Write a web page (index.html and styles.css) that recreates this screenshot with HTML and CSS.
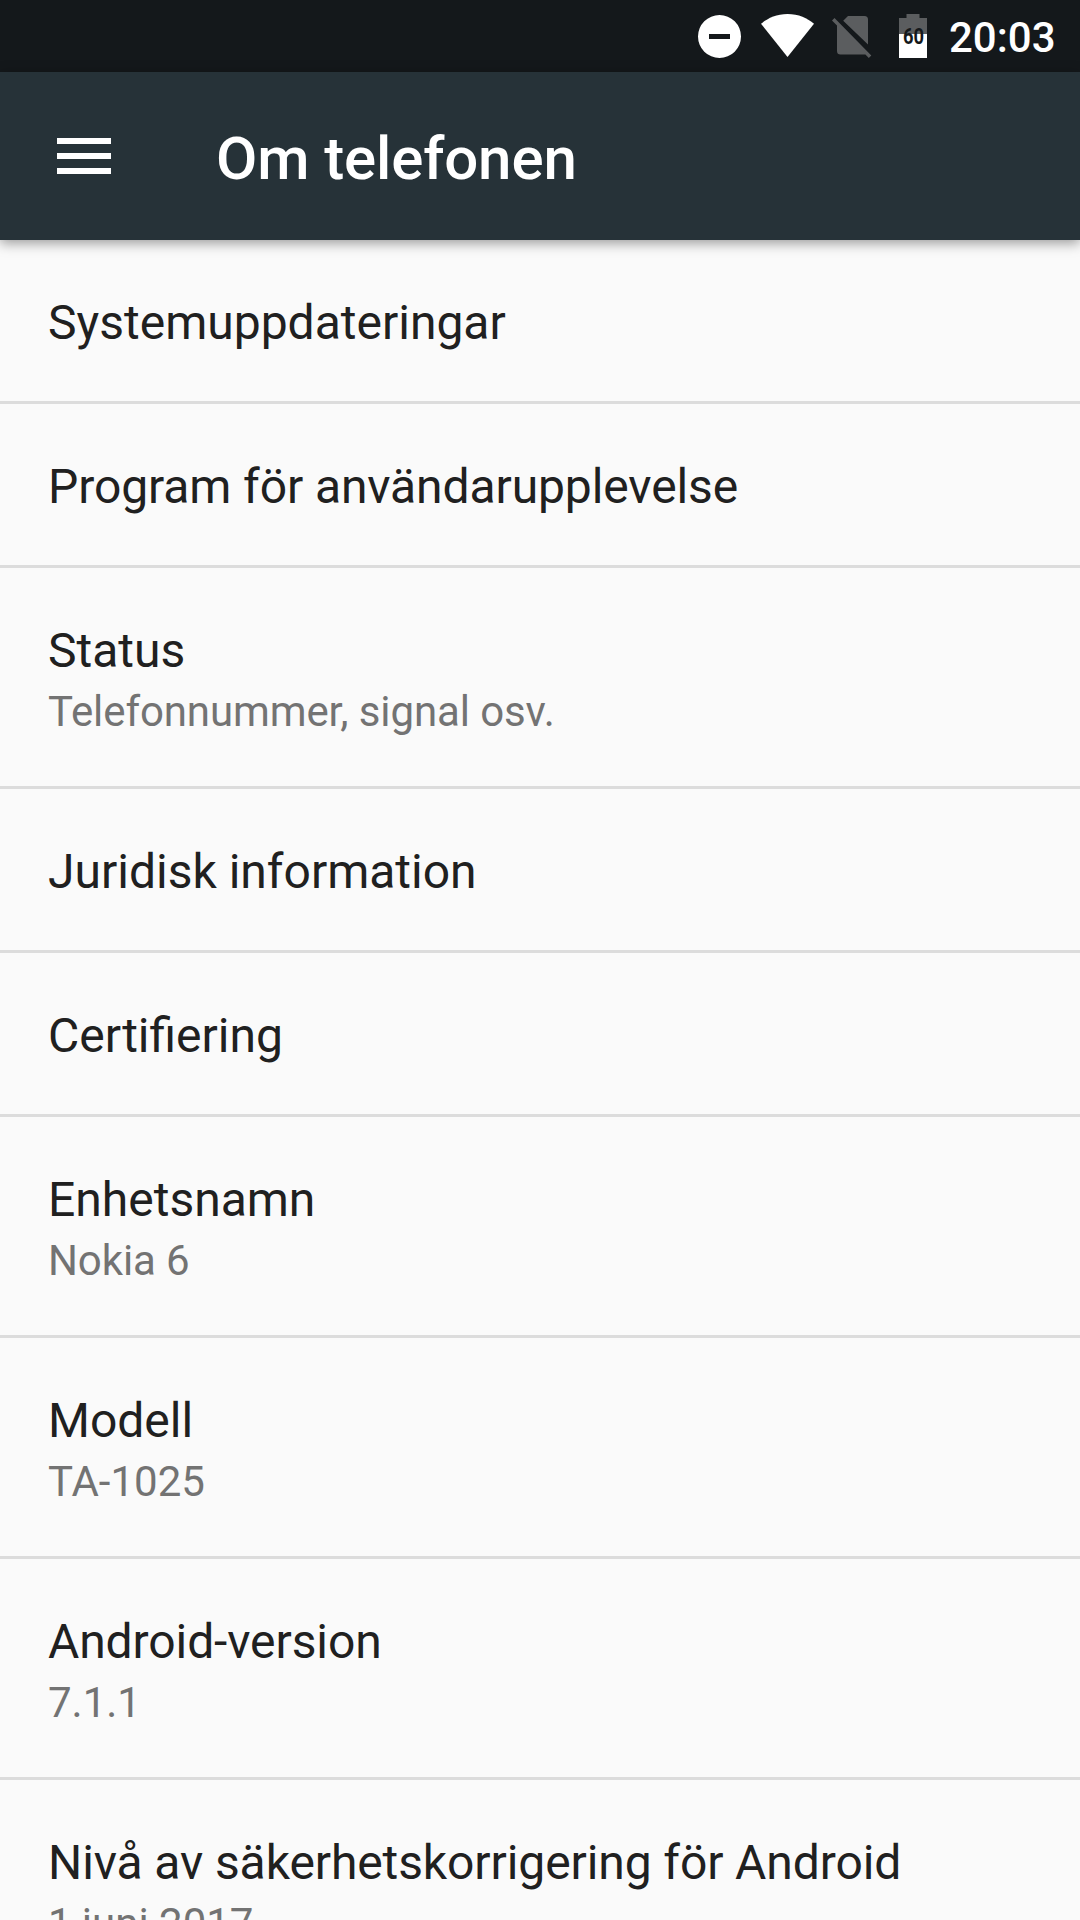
FILE: index.html
```html
<!DOCTYPE html>
<html lang="sv">
<head>
    <meta charset="UTF-8">
    <meta name="viewport" content="width=device-width, initial-scale=1.0">
    <title>Om telefonen</title>
    <link rel="stylesheet" href="styles.css">
</head>
<body>
    <div class="status-bar">
        <svg class="icon-dnd" width="43" height="43" viewBox="0 0 43 43">
            <path fill="#fff" fill-rule="evenodd" d="M21.5 0a21.5 21.5 0 1 0 0 43a21.5 21.5 0 1 0 0-43zM11 19h21v5H11z"/>
        </svg>
        <svg class="icon-wifi" width="53" height="43" viewBox="0 0 53 43">
            <path fill="#fff" d="M26.5 43L0 9.8C6.5 4.2 15.5 0 26.5 0S46.5 4.2 53 9.8z"/>
        </svg>
        <svg class="icon-sim" width="40" height="42" viewBox="0 0 40 42">
            <path d="M16 0h16.500a3.500 3.500 0 0 1 3.500 3.500v25L11.200 4.800z"/>
            <path d="M2.500 2L0 4.600 5 9.600V35a3.500 3.500 0 0 0 3.500 3.500h24.900l3.400 3.500 2.500-2.500z"/>
        </svg>
        <svg class="icon-battery" width="28" height="44" viewBox="0 0 28 44">
            <path class="battery-empty" d="M7.500 0h13v4H28v16H0V4h7.500z"/>
            <path fill="#fff" d="M0 20h28v24H0z"/>
            <text class="battery-level" x="4" y="30" textLength="21" lengthAdjust="spacingAndGlyphs">60</text>
        </svg>
        <span class="clock">20:03</span>
    </div>
    <header class="toolbar">
        <div class="menu">
            <span></span>
            <span></span>
            <span></span>
        </div>
        <h1>Om telefonen</h1>
    </header>
    <ul class="list">
        <li class="item">
            <div class="title">Systemuppdateringar</div>
        </li>
        <li class="item">
            <div class="title tight">Program för användarupplevelse</div>
        </li>
        <li class="item">
            <div class="title">Status</div>
            <div class="summary tight">Telefonnummer, signal osv.</div>
        </li>
        <li class="item">
            <div class="title">Juridisk information</div>
        </li>
        <li class="item">
            <div class="title">Certifiering</div>
        </li>
        <li class="item">
            <div class="title">Enhetsnamn</div>
            <div class="summary tight">Nokia 6</div>
        </li>
        <li class="item">
            <div class="title">Modell</div>
            <div class="summary">TA-1025</div>
        </li>
        <li class="item">
            <div class="title tight">Android-version</div>
            <div class="summary">7.1.1</div>
        </li>
        <li class="item">
            <div class="title tight">Nivå av säkerhetskorrigering för Android</div>
            <div class="summary">1 juni 2017</div>
        </li>
    </ul>
</body>
</html>
```
FILE: styles.css
```css
* {
    box-sizing: border-box;
}
body {
    margin: 0;
    height: 1920px;
    overflow: hidden;
    display: flex;
    flex-direction: column;
    background: #fafafa;
    font-family: Roboto, "Noto Sans", sans-serif;
}
.status-bar {
    flex: none;
    height: 72px;
    padding: 14px 24px 0 0;
    display: flex;
    justify-content: flex-end;
    align-items: flex-start;
    background: #14181b;
}
.icon-dnd {
    margin: 1px 20px 0 0;
}
.icon-wifi {
    margin-right: 18px;
}
.icon-sim {
    margin: 2px 27px 0 0;
    fill: #5b5d5f;
}
.icon-battery {
    margin-right: 22px;
}
.battery-empty {
    fill: #5b5d5f;
}
.battery-level {
    font-size: 22px;
    font-weight: 700;
    fill: #14181b;
}
.clock {
    width: 107px;
    color: #fff;
    font-size: 42px;
    font-weight: 500;
    line-height: 48px;
}
.toolbar {
    flex: none;
    height: 168px;
    padding-left: 57px;
    display: flex;
    align-items: center;
    background: #263238;
    box-shadow: 0 3px 12px rgba(0, 0, 0, 0.4);
}
.menu {
    width: 54px;
    margin-right: 105px;
    display: flex;
    flex-direction: column;
    gap: 9px;
}
.menu span {
    height: 6px;
    background: #fff;
}
h1 {
    margin: 6px 0 0;
    color: #fff;
    font-size: 60px;
    font-weight: 500;
    line-height: 70px;
    letter-spacing: -0.13px;
}
.list {
    margin: 0;
    padding: 0;
    list-style: none;
}
.item {
    padding: 50px 48px 46px;
    border-bottom: 3px solid #dcdcdc;
}
.title {
    color: #202020;
    font-size: 48px;
    line-height: 65px;
}
.summary {
    color: #737373;
    font-size: 42px;
    line-height: 57px;
}
.tight {
    letter-spacing: -0.1px;
}
```
